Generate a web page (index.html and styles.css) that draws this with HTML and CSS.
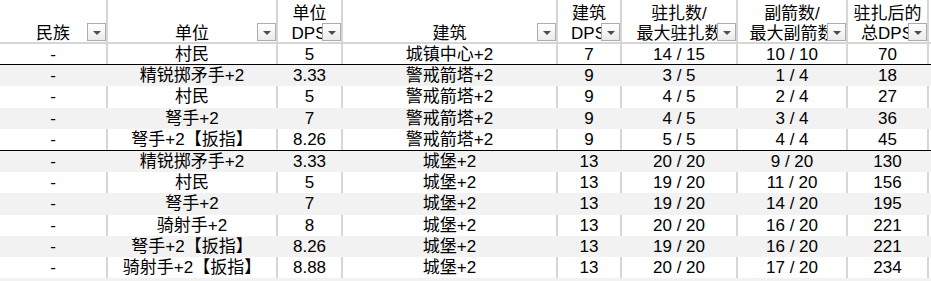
FILE: index.html
```html
<!DOCTYPE html>
<html lang="zh-CN">
<head>
<meta charset="utf-8">
<title>驻扎DPS</title>
<link rel="stylesheet" href="styles.css">
</head>
<body>
<div class="sheet">
  <div class="row head">
    <div class="cell"><span>民族</span><i class="filter"></i></div>
    <div class="cell"><span>单位</span><i class="filter"></i></div>
    <div class="cell"><span>单位</span><span class="tail">DPS值</span><i class="filter"></i></div>
    <div class="cell"><span>建筑</span><i class="filter"></i></div>
    <div class="cell"><span>建筑</span><span class="tail">DPS值</span><i class="filter"></i></div>
    <div class="cell"><span>驻扎数/</span><span>最大驻扎数</span><i class="filter"></i></div>
    <div class="cell"><span>副箭数/</span><span>最大副箭数</span><i class="filter"></i></div>
    <div class="cell"><span>驻扎后的</span><span class="tail">总DPS值</span><i class="filter"></i></div>
  </div>

  <div class="row first sep">
    <div class="cell">-</div><div class="cell">村民</div><div class="cell">5</div><div class="cell">城镇中心+2</div><div class="cell">7</div><div class="cell">14 / 15</div><div class="cell">10 / 10</div><div class="cell">70</div>
  </div>

  <div class="row band a">
    <div class="cell">-</div><div class="cell">精锐掷矛手+2</div><div class="cell">3.33</div><div class="cell">警戒箭塔+2</div><div class="cell">9</div><div class="cell">3 / 5</div><div class="cell">1 / 4</div><div class="cell">18</div>
  </div>
  <div class="row a">
    <div class="cell">-</div><div class="cell">村民</div><div class="cell">5</div><div class="cell">警戒箭塔+2</div><div class="cell">9</div><div class="cell">4 / 5</div><div class="cell">2 / 4</div><div class="cell">27</div>
  </div>
  <div class="row band a">
    <div class="cell">-</div><div class="cell">弩手+2</div><div class="cell">7</div><div class="cell">警戒箭塔+2</div><div class="cell">9</div><div class="cell">4 / 5</div><div class="cell">3 / 4</div><div class="cell">36</div>
  </div>
  <div class="row a sep">
    <div class="cell">-</div><div class="cell">弩手+2【扳指】</div><div class="cell">8.26</div><div class="cell">警戒箭塔+2</div><div class="cell">9</div><div class="cell">5 / 5</div><div class="cell">4 / 4</div><div class="cell">45</div>
  </div>

  <div class="row band b">
    <div class="cell">-</div><div class="cell">精锐掷矛手+2</div><div class="cell">3.33</div><div class="cell">城堡+2</div><div class="cell">13</div><div class="cell">20 / 20</div><div class="cell">9 / 20</div><div class="cell">130</div>
  </div>
  <div class="row b">
    <div class="cell">-</div><div class="cell">村民</div><div class="cell">5</div><div class="cell">城堡+2</div><div class="cell">13</div><div class="cell">19 / 20</div><div class="cell">11 / 20</div><div class="cell">156</div>
  </div>
  <div class="row band b">
    <div class="cell">-</div><div class="cell">弩手+2</div><div class="cell">7</div><div class="cell">城堡+2</div><div class="cell">13</div><div class="cell">19 / 20</div><div class="cell">14 / 20</div><div class="cell">195</div>
  </div>
  <div class="row b">
    <div class="cell">-</div><div class="cell">骑射手+2</div><div class="cell">8</div><div class="cell">城堡+2</div><div class="cell">13</div><div class="cell">20 / 20</div><div class="cell">16 / 20</div><div class="cell">221</div>
  </div>
  <div class="row band b">
    <div class="cell">-</div><div class="cell">弩手+2【扳指】</div><div class="cell">8.26</div><div class="cell">城堡+2</div><div class="cell">13</div><div class="cell">19 / 20</div><div class="cell">16 / 20</div><div class="cell">221</div>
  </div>
  <div class="row b">
    <div class="cell">-</div><div class="cell">骑射手+2【扳指】</div><div class="cell">8.88</div><div class="cell">城堡+2</div><div class="cell">13</div><div class="cell">20 / 20</div><div class="cell">17 / 20</div><div class="cell">234</div>
  </div>
  <div class="row band b">
    <div class="cell"></div><div class="cell"></div><div class="cell"></div><div class="cell"></div><div class="cell"></div><div class="cell"></div><div class="cell"></div><div class="cell"></div>
  </div>
</div>
</body>
</html>
```

FILE: styles.css
```css
html, body {
  margin: 0;
  padding: 0;
  background: #ffffff;
}

body {
  font-family: "Liberation Sans", "Noto Sans CJK SC", sans-serif;
  font-size: 17px;
  color: #000000;
  overflow: hidden;
}

.sheet {
  width: 931px;
}

.row {
  display: grid;
  grid-template-columns: 108px 170px 65px 215px 64px 116px 110px 81px;
  background: #ffffff;
}

.cell {
  box-sizing: border-box;
  border-right: 2px solid #d6d6d6;
  display: flex;
  align-items: center;
  justify-content: center;
  line-height: 20px;
  padding-top: 1px;
  white-space: nowrap;
  overflow: hidden;
}

.row.head {
  height: 42px;
  border-bottom: 2px solid #d6d6d6;
}

.head .cell {
  position: relative;
  flex-direction: column;
  justify-content: flex-end;
  align-items: center;
  padding-top: 0;
  padding-bottom: 0;
}

.head .cell span {
  display: block;
  height: 20px;
  line-height: 24px;
}

.head .cell .tail {
  padding-left: 16px;
}

.filter {
  position: absolute;
  right: 0;
  bottom: 1px;
  width: 19px;
  height: 18px;
  box-sizing: border-box;
  border: 1px solid #acacac;
  background: linear-gradient(#ffffff, #ebebeb);
}

.filter::after {
  content: "";
  position: absolute;
  left: 5px;
  top: 7px;
  width: 0;
  height: 0;
  border-left: 4px solid transparent;
  border-right: 4px solid transparent;
  border-top: 4px solid #4d4d4d;
}

.row.first {
  height: 20px;
}

.row.a {
  height: 21.25px;
}

.row.b {
  height: 21.2px;
}

.row.sep {
  border-bottom: 1px solid #000000;
}

.row.band {
  background: #f2f2f2;
}

.row.band .cell {
  border-right-color: transparent;
}
```
